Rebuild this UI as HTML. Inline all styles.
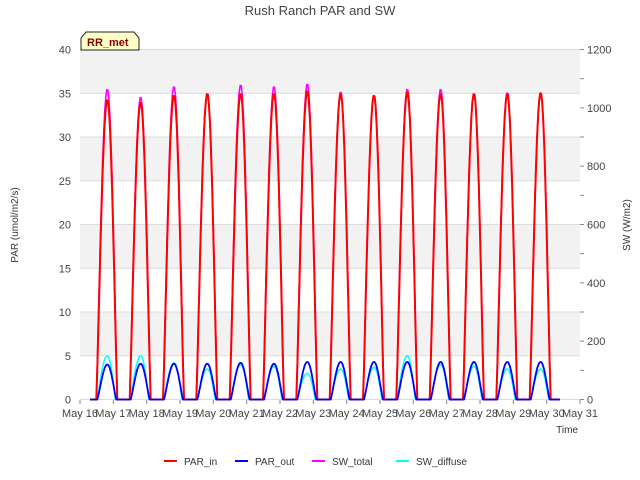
<!DOCTYPE html>
<html><head><meta charset="utf-8"><style>
html,body{margin:0;padding:0;background:#fff;width:640px;height:480px;overflow:hidden}
svg text{font-family:"Liberation Sans",sans-serif}
</style></head><body>
<svg id="s" width="640" height="480" xmlns="http://www.w3.org/2000/svg">
<rect x="0" y="0" width="640" height="480" fill="#fff"/>
<g id="bands"></g>
<text x="320" y="15" text-anchor="middle" font-size="13" fill="#444">Rush Ranch PAR and SW</text>
<text transform="translate(18,225) rotate(-90)" text-anchor="middle" font-size="10" fill="#333">PAR (umol/m2/s)</text>
<text transform="translate(630,225) rotate(-90)" text-anchor="middle" font-size="10" fill="#333">SW (W/m2)</text>
<text x="578" y="433" text-anchor="end" font-size="10" fill="#333">Time</text>
<g id="axes" font-size="11" fill="#444"></g>
<g id="lines" fill="none" stroke-linejoin="round"></g>
<path d="M81,50 L81,38 L86,32 L134,32 L139,38 L139,50 Z" fill="#ffffc8" stroke="#222" stroke-width="1"/>
<text x="87" y="46" font-size="11" font-weight="bold" fill="#8b0000">RR_met</text>
<g font-size="10" fill="#333">
<line x1="164" y1="461" x2="177" y2="461" stroke="#f00" stroke-width="2"/><text x="184" y="465">PAR_in</text>
<line x1="235" y1="461" x2="248" y2="461" stroke="#00f" stroke-width="2"/><text x="255" y="465">PAR_out</text>
<line x1="312" y1="461" x2="325" y2="461" stroke="#f0f" stroke-width="2"/><text x="332" y="465">SW_total</text>
<line x1="396" y1="461" x2="409" y2="461" stroke="#0ff" stroke-width="2"/><text x="416" y="465">SW_diffuse</text>
</g>
</svg>
<script>
var NS="http://www.w3.org/2000/svg";
function el(p,t,a,txt){var e=document.createElementNS(NS,t);for(var k in a)e.setAttribute(k,a[k]);if(txt!=null)e.textContent=txt;p.appendChild(e);return e;}
var X0=80,X1=580,Y0=399.5,S=8.75,D=(X1-X0)/15;
var b=document.getElementById('bands'),ax=document.getElementById('axes'),ln=document.getElementById('lines');
el(b,'rect',{x:X0,y:50,width:500,height:350,fill:'#fff'});
for(var v=0;v<40;v+=5){ if((v/5)%2==1) el(b,'rect',{x:X0,y:Y0-(v+5)*S,width:500,height:5*S,fill:'#f2f2f2'});}
for(var v=0;v<=40;v+=5){var y=Y0-v*S;el(b,'line',{x1:X0,x2:X1,y1:y,y2:y,stroke:'#dcdcdc','stroke-width':1});
 el(ax,'text',{x:71,y:y+4,'text-anchor':'end'},v);}
for(var w=0;w<=1200;w+=100){var y=Y0-w/30*S;el(ax,'line',{x1:X1,x2:X1+4,y1:y,y2:y,stroke:'#888'});
 if(w%200==0)el(ax,'text',{x:587,y:y+4},w);}
for(var d=0;d<=15;d++){var x=X0+d*D;el(ax,'line',{x1:x,x2:x,y1:400,y2:404,stroke:'#888'});
 el(ax,'text',{x:x,y:417,'text-anchor':'middle'},'May '+(16+d));}
var pin=[34.3,34,34.8,35,35,35,35.3,35,34.8,35.2,35,35,35,35.1];
var psw=[35.5,34.6,35.8,35,36,35.8,36.1,35.2,34.8,35.5,35.5,34.9,35.1,35];
var pout=[4,4.1,4.1,4.1,4.2,4.1,4.3,4.3,4.3,4.3,4.3,4.3,4.3,4.3];
var pdf=[5,5,4.2,3.5,4,3.8,3,3.5,3.7,5,4,3.8,3.5,3.5];
function series(peaks,wl,wr,pow,col,sw){
 var d='M'+(X0+10)+','+Y0;
 for(var i=0;i<14;i++){var c=X0+(i+1)*D-6;
  d+=' L'+(c-wl).toFixed(1)+','+Y0;
  for(var k=1;k<20;k++){var t=k/20,x=c-wl+t*(wl+wr),ph=x<c?(x-(c-wl))/wl*Math.PI/2:Math.PI/2+(x-c)/wr*Math.PI/2;
   var v=peaks[i]*Math.pow(Math.sin(ph),pow);d+=' L'+x.toFixed(1)+','+(Y0-v*S).toFixed(1);}
  d+=' L'+(c+wr).toFixed(1)+','+Y0;}
 d+=' L'+(X0+480)+','+Y0;
 el(ln,'path',{d:d,stroke:col,'stroke-width':sw});}
series(pdf,10,8,1,'#00ffff',1.5);
series(psw,11,10,1.1,'#ff00ff',1.6);
series(pin,11,10,1.15,'#ff0000',2);
series(pout,10,9,1.2,'#0000ff',1.8);
</script>
</body></html>
